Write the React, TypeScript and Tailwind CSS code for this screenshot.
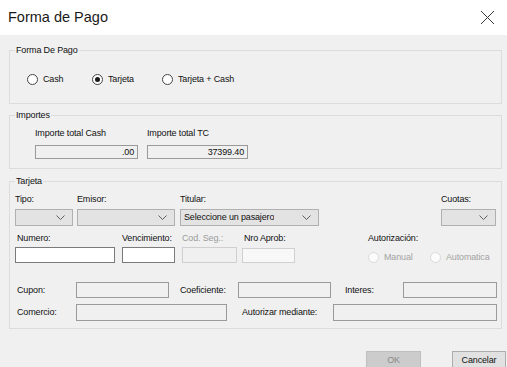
import React from "react";

const FONT = { fontFamily: '"Liberation Sans", Arial, sans-serif' };

function Radio({ label, checked, disabled }: { label: string; checked?: boolean; disabled?: boolean }) {
  return (
    <div className="flex items-center gap-[5px] h-[12px]">
      <span
        className={`flex items-center justify-center w-[11px] h-[11px] rounded-full border ${
          disabled ? "border-[#dadada] bg-[#fbfbfb]" : "border-[#444] bg-white"
        }`}
      >
        {checked && <span className="w-[5px] h-[5px] rounded-full bg-[#1a1a1a]" />}
      </span>
      <span className={disabled ? "text-[#a3a3a3]" : "text-[#111]"}>{label}</span>
    </div>
  );
}

function Chevron() {
  return (
    <svg width="9" height="5" viewBox="0 0 9 5" className="shrink-0">
      <polyline points="0.5,0.5 4.5,4.5 8.5,0.5" fill="none" stroke="#5f5f5f" strokeWidth="1" />
    </svg>
  );
}

function Combo({ w, text }: { w: string; text?: string }) {
  return (
    <div className={`${w} h-[17px] flex items-center justify-between pl-[3px] pr-[7px] bg-[#e3e3e3] border border-[#b0b0b0]`}>
      <span className="text-[#111] truncate">{text ?? ""}</span>
      <Chevron />
    </div>
  );
}

function Box({ w, h = "h-[16px]", cls, children }: { w: string; h?: string; cls: string; children?: React.ReactNode }) {
  return <div className={`${w} ${h} border ${cls} flex items-center justify-end pr-[3px]`}>{children}</div>;
}

function Group({ title, h, mt, children }: { title: string; h: string; mt: string; children: React.ReactNode }) {
  return (
    <div className={`relative ${mt} ${h} border border-[#dcdcdc]`}>
      <span className="absolute -top-[6px] left-[5px] px-[1px] leading-[11px] bg-[#f0f0f0] text-[#111]">{title}</span>
      {children}
    </div>
  );
}

export default function App() {
  const ro = "bg-[#f0f0f0] border-[#9a9a9a]";
  const off = "bg-[#f0f0f0] border-[#cfcfcf]";
  const edit = "bg-white border-[#7a7a7a]";

  return (
    <div style={FONT} className="w-[507px] h-[367px] overflow-hidden bg-[#f0f0f0] text-[9px] leading-[11px] tracking-[-0.15px] text-[#111]">
      {/* Title bar */}
      <div className="h-[35px] bg-white flex items-center justify-between pl-[8px] pr-[12px]">
        <span className="text-[14.5px] tracking-normal text-[#1a1a1a]">Forma de Pago</span>
        <svg width="15" height="15" viewBox="0 0 15 15">
          <path d="M1 1 L14 14 M14 1 L1 14" stroke="#3a3a3a" strokeWidth="1" fill="none" />
        </svg>
      </div>

      <div className="pl-[9px] pr-[5px]">
        {/* Forma De Pago */}
        <Group title="Forma De Pago" h="h-[54px]" mt="mt-[15px]">
          <div className="flex pl-[17px] pt-[22px]">
            <div className="w-[65px]"><Radio label="Cash" /></div>
            <div className="w-[70px]"><Radio label="Tarjeta" checked /></div>
            <Radio label="Tarjeta + Cash" />
          </div>
        </Group>

        {/* Importes */}
        <Group title="Importes" h="h-[54px]" mt="mt-[11px]">
          <div className="flex pl-[25px] pt-[12px] gap-[9px]">
            <div className="flex flex-col w-[103px]">
              <span>Importe total Cash</span>
              <Box w="w-[103px]" h="h-[14px]" cls={`${ro} mt-[6px]`}>.00</Box>
            </div>
            <div className="flex flex-col w-[101px]">
              <span>Importe total TC</span>
              <Box w="w-[101px]" h="h-[14px]" cls={`${ro} mt-[6px]`}>37399.40</Box>
            </div>
          </div>
        </Group>

        {/* Tarjeta */}
        <Group title="Tarjeta" h="h-[148px]" mt="mt-[12px]">
          <div className="flex pl-[5px] pr-[5px] pt-[12px]">
            <div className="flex flex-col w-[58px]">
              <span>Tipo:</span>
              <div className="mt-[4px]"><Combo w="w-[58px]" /></div>
            </div>
            <div className="flex flex-col w-[98px] ml-[4px]">
              <span>Emisor:</span>
              <div className="mt-[4px]"><Combo w="w-[98px]" /></div>
            </div>
            <div className="flex flex-col w-[139px] ml-[5px]">
              <span>Titular:</span>
              <div className="mt-[4px]"><Combo w="w-[139px]" text="Seleccione un pasajero" /></div>
            </div>
            <div className="flex flex-col w-[55px] ml-auto">
              <span>Cuotas:</span>
              <div className="mt-[4px]"><Combo w="w-[55px]" /></div>
            </div>
          </div>

          <div className="flex pl-[5px] mt-[7px]">
            <div className="flex flex-col w-[100px]">
              <span className="pl-[2px]">Numero:</span>
              <Box w="w-[100px]" cls={`${edit} mt-[3px]`} />
            </div>
            <div className="flex flex-col w-[53px] ml-[7px]">
              <span>Vencimiento:</span>
              <Box w="w-[53px]" cls={`${edit} mt-[3px]`} />
            </div>
            <div className="flex flex-col w-[55px] ml-[7px]">
              <span className="text-[#9c9c9c]">Cod. Seg.:</span>
              <Box w="w-[55px]" cls={`${off} mt-[3px]`} />
            </div>
            <div className="flex flex-col w-[53px] ml-[5px]">
              <span className="pl-[2px]">Nro Aprob:</span>
              <Box w="w-[53px]" h="h-[15px]" cls="bg-[#f8f8f8] border-[#d0d0d0] mt-[4px]" />
            </div>
            <div className="flex flex-col ml-[73px]">
              <span>Autorización:</span>
              <div className="flex mt-[7px]">
                <div className="w-[62px]"><Radio label="Manual" disabled /></div>
                <Radio label="Automatica" disabled />
              </div>
            </div>
          </div>

          <div className="flex items-center pl-[7px] mt-[19px]">
            <span className="w-[59px]">Cupon:</span>
            <Box w="w-[93px]" cls={ro} />
            <span className="w-[58px] ml-[11px]">Coeficiente:</span>
            <Box w="w-[93px]" cls={ro} />
            <span className="w-[58px] ml-[14px]">Interes:</span>
            <Box w="w-[94px]" cls={ro} />
          </div>

          <div className="flex items-center pl-[7px] mt-[6px]">
            <span className="w-[59px]">Comercio:</span>
            <Box w="w-[151px]" h="h-[17px]" cls={ro} />
            <span className="w-[91px] ml-[15px]">Autorizar mediante:</span>
            <Box w="w-[164px]" h="h-[17px]" cls={ro} />
          </div>
        </Group>
      </div>

      {/* Buttons */}
      <div className="flex justify-end gap-[31px] pr-[1px] mt-[22px]">
        <button className="w-[55px] h-[18px] bg-[#cccccc] border border-[#bfbfbf] text-[#8a8a8a]">OK</button>
        <button className="w-[54px] h-[18px] bg-[#e1e1e1] border border-[#adadad] text-[#111]">Cancelar</button>
      </div>
    </div>
  );
}
